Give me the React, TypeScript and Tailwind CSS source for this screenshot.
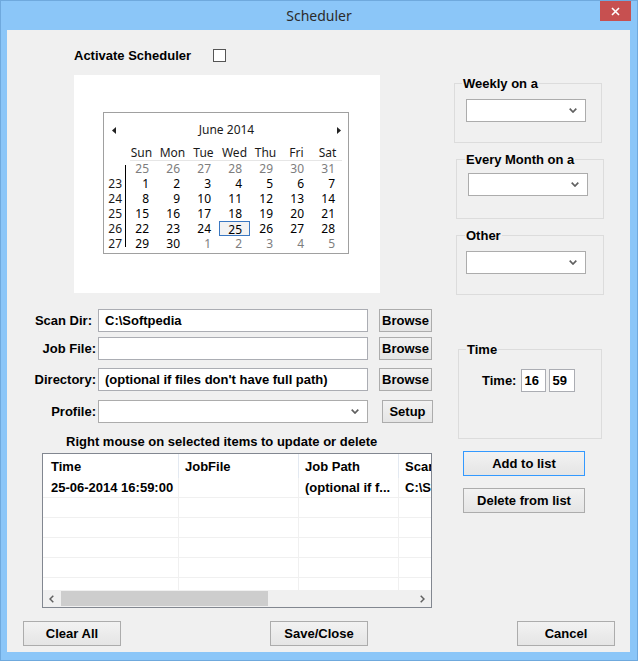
import React from "react";

const sans = "font-['Liberation_Sans',Arial,sans-serif]";
const seg = "font-['Noto_Sans','Open_Sans',sans-serif]";

function Chevron() {
  return (
    <svg width="8" height="5" viewBox="0 0 8 5" className="text-[#606060]">
      <path d="M0.7 0.7 L4 4 L7.3 0.7" fill="none" stroke="currentColor" strokeWidth="1.7" />
    </svg>
  );
}

function Combo({ className = "" }: { className?: string }) {
  return (
    <div className={`flex items-center justify-end h-[23px] bg-white border border-[#acacac] pr-[8px] ${className}`}>
      <Chevron />
    </div>
  );
}

function Btn({ label, className = "" }: { label: string; className?: string }) {
  return (
    <button
      className={`flex items-center justify-center border bg-gradient-to-b from-[#f2f2f2] to-[#e5e5e5] ${className}`}
    >
      {label}
    </button>
  );
}

function Field({ value = "", className = "" }: { value?: string; className?: string }) {
  return (
    <input
      readOnly
      defaultValue={value}
      className={`h-[23px] bg-white border border-[#abadb3] px-[6px] outline-none ${className}`}
    />
  );
}

function Group({
  title,
  className = "",
  children,
}: {
  title: string;
  className?: string;
  children: React.ReactNode;
}) {
  return (
    <fieldset className={`border border-[#dcdcdc] ${className}`}>
      <legend className="px-px leading-[15px]">{title}</legend>
      {children}
    </fieldset>
  );
}

function Calendar() {
  const days: { d: number; other: boolean }[] = [];
  for (let d = 25; d <= 31; d++) days.push({ d, other: true });
  for (let d = 1; d <= 30; d++) days.push({ d, other: false });
  for (let d = 1; d <= 5; d++) days.push({ d, other: true });
  const rows = [0, 1, 2, 3, 4, 5].map((r) => days.slice(r * 7, r * 7 + 7));
  const weekNums = ["", "23", "24", "25", "26", "27"];

  return (
    <div className={`w-[246px] h-[142px] border border-[#a0a0a0] pt-[9px] text-[12px] font-normal text-[#1a1a1a] ${seg}`}>
      <div className="flex items-center justify-between h-[16px] pl-[8px] pr-[7px]">
        <svg width="4" height="7" viewBox="0 0 4 7">
          <path d="M4 0 L0 3.5 L4 7 Z" fill="#222" />
        </svg>
        <span className="leading-[16px]">June 2014</span>
        <svg width="4" height="7" viewBox="0 0 4 7">
          <path d="M0 0 L4 3.5 L0 7 Z" fill="#222" />
        </svg>
      </div>
      <div className="flex mt-[7px] h-[15px] pl-[22px] leading-[15px]">
        {["Sun", "Mon", "Tue", "Wed", "Thu", "Fri", "Sat"].map((n) => (
          <div key={n} className="w-[31px] text-center">
            {n}
          </div>
        ))}
      </div>
      <div className="ml-[26px] w-[212px] h-px bg-[#e6e6e6]" />
      <div className="flex">
        <div className="flex">
          <div className="w-[21px] pr-[3px]">
            {weekNums.map((w, i) => (
              <div key={i} className="h-[15px] leading-[15px] text-right">
                {w}
              </div>
            ))}
          </div>
          <div className="w-px bg-black mt-[4px] mb-[4px]" />
        </div>
        <div>
          {rows.map((row, ri) => (
            <div key={ri} className="flex">
              {row.map((c, ci) => {
                const sel = !c.other && c.d === 25;
                return (
                  <div
                    key={ci}
                    className={`w-[31px] h-[15px] leading-[15px] text-right ${
                      sel ? "border border-[#3a78c2] bg-[#f3f3f3] pr-[7px] leading-[13px]" : "pr-[8px]"
                    } ${c.other ? "text-[#7d7d7d]" : "text-black"}`}
                  >
                    {c.d}
                  </div>
                );
              })}
            </div>
          ))}
        </div>
      </div>
    </div>
  );
}

function ListView() {
  const cols = ["Time", "JobFile", "Job Path", "Scan Dir"];
  const widths = ["w-[136px]", "w-[120px]", "w-[100px]", "w-[120px]"];
  const data = ["25-06-2014 16:59:00", "", "(optional if f...", "C:\\Softpedia"];
  const pads = ["pl-[8px]", "pl-[6px]", "pl-[6px]", "pl-[6px]"];
  return (
    <div className="ml-[35px] w-[390px] h-[155px] border border-[#828790] bg-white flex flex-col">
      <div className="flex-1 overflow-hidden">
        <div className="flex h-[24px] items-center">
          {cols.map((c, i) => (
            <div
              key={c}
              className={`${widths[i]} shrink-0 h-full flex items-center border-r border-[#e3e9f1] whitespace-nowrap ${pads[i]}`}
            >
              {c}
            </div>
          ))}
        </div>
        {[0, 1, 2, 3, 4, 5].map((r) => (
          <div key={r} className="flex h-[20px] border-b border-[#f0f0f0]">
            {cols.map((c, i) => (
              <div
                key={c}
                className={`${widths[i]} shrink-0 h-full flex items-center border-r border-[#f0f0f0] whitespace-nowrap overflow-hidden ${pads[i]}`}
              >
                {r === 0 ? data[i] : ""}
              </div>
            ))}
          </div>
        ))}
      </div>
      <div className="h-[17px] bg-[#f0f0f0] flex items-center">
        <div className="w-[17px] flex justify-center">
          <svg width="5" height="8" viewBox="0 0 5 8">
            <path d="M4.3 0.7 L1 4 L4.3 7.3" fill="none" stroke="#606060" strokeWidth="1.5" />
          </svg>
        </div>
        <div className="ml-px w-[207px] h-[15px] bg-[#cdcdcd]" />
        <div className="flex-1" />
        <div className="w-[17px] flex justify-center">
          <svg width="5" height="8" viewBox="0 0 5 8">
            <path d="M0.7 0.7 L4 4 L0.7 7.3" fill="none" stroke="#606060" strokeWidth="1.5" />
          </svg>
        </div>
      </div>
    </div>
  );
}

export default function App() {
  return (
    <div className={`w-[638px] h-[661px] bg-[#8bc6f8] border border-[#6fa9dd] flex flex-col ${sans} text-[13px] font-bold text-black leading-[15px]`}>
      {/* title bar */}
      <div className="relative h-[29px] flex items-center justify-center">
        <span className={`${seg} font-normal text-[14px] text-[#2b2b2b] -mt-[1px]`}>Scheduler</span>
        <div className="absolute right-[6px] top-0 w-[31px] h-[20px] bg-[#c75050] flex items-center justify-center">
          <svg width="9" height="9" viewBox="0 0 9 9">
            <path d="M1 1 L8 8 M8 1 L1 8" stroke="white" strokeWidth="1.6" />
          </svg>
        </div>
      </div>

      {/* client area */}
      <div className="ml-[6px] w-[623px] h-[622px] bg-[#f0f0f0] flex flex-col">
        <div className="flex h-[578px]">
          {/* left column */}
          <div className="w-[433px] flex flex-col">
            <div className="mt-[18px] ml-[67px] flex items-center h-[15px]">
              <span>Activate Scheduler</span>
              <div className="ml-[22px] w-[13px] h-[13px] border border-[#555] bg-white" />
            </div>
            <div className="mt-[12px] ml-[67px] w-[306px] h-[218px] bg-white pt-[37px] pl-[29px]">
              <Calendar />
            </div>

            <div className="mt-[16px] flex items-center">
              <div className="w-[91px] text-right pr-[6px]">Scan Dir:</div>
              <Field value="C:\Softpedia" className="w-[270px]" />
              <Btn label="Browse" className="ml-[11px] w-[53px] h-[23px] border-[#acacac]" />
            </div>
            <div className="mt-[5px] flex items-center">
              <div className="w-[91px] text-right pr-[2px]">Job File:</div>
              <Field className="w-[270px]" />
              <Btn label="Browse" className="ml-[11px] w-[53px] h-[23px] border-[#acacac]" />
            </div>
            <div className="mt-[8px] flex items-center">
              <div className="w-[91px] text-right pr-[2px]">Directory:</div>
              <Field value="(optional if files don't have full path)" className="w-[270px]" />
              <Btn label="Browse" className="ml-[11px] w-[53px] h-[23px] border-[#acacac]" />
            </div>
            <div className="mt-[9px] flex items-center">
              <div className="w-[91px] text-right pr-[2px]">Profile:</div>
              <Combo className="w-[270px]" />
              <Btn label="Setup" className="ml-[14px] w-[51px] h-[23px] border-[#acacac]" />
            </div>

            <div className="mt-[11px] ml-[59px]">Right mouse on selected items to update or delete</div>
            <div className="mt-[4px]">
              <ListView />
            </div>
          </div>

          {/* right column */}
          <div className="flex-1 flex flex-col">
            <Group title="Weekly on a" className="mt-[46px] ml-[14px] w-[148px] h-[67px] pl-[7px]">
              <Combo className="mt-[8px] ml-[4px] w-[120px]" />
            </Group>
            <Group title="Every Month on a" className="mt-[9px] ml-[16px] w-[148px] h-[67px] pl-[8px]">
              <Combo className="mt-[6px] ml-[3px] w-[120px]" />
            </Group>
            <Group title="Other" className="mt-[9px] ml-[16px] w-[148px] h-[67px] pl-[8px]">
              <Combo className="mt-[8px] ml-[1px] w-[120px]" />
            </Group>
            <Group title="Time" className="mt-[47px] ml-[18px] w-[144px] h-[97px] pl-[7px]">
              <div className="mt-[12px] ml-[16px] flex items-center">
                <span>Time:</span>
                <Field value="16" className="ml-[5px] w-[25px] !px-[2px]" />
                <Field value="59" className="ml-[3px] w-[26px] !px-[2px]" />
              </div>
            </Group>
            <Btn label="Add to list" className="mt-[12px] ml-[23px] w-[122px] h-[25px] border-[#3399ff]" />
            <Btn label="Delete from list" className="mt-[12px] ml-[23px] w-[122px] h-[25px] border-[#acacac]" />
          </div>
        </div>

        {/* bottom buttons */}
        <div className="mt-[13px] flex justify-between pl-[16px] pr-[15px]">
          <Btn label="Clear All" className="w-[98px] h-[25px] border-[#acacac]" />
          <Btn label="Save/Close" className="w-[98px] h-[25px] border-[#acacac]" />
          <Btn label="Cancel" className="w-[98px] h-[25px] border-[#acacac]" />
        </div>
      </div>
    </div>
  );
}
